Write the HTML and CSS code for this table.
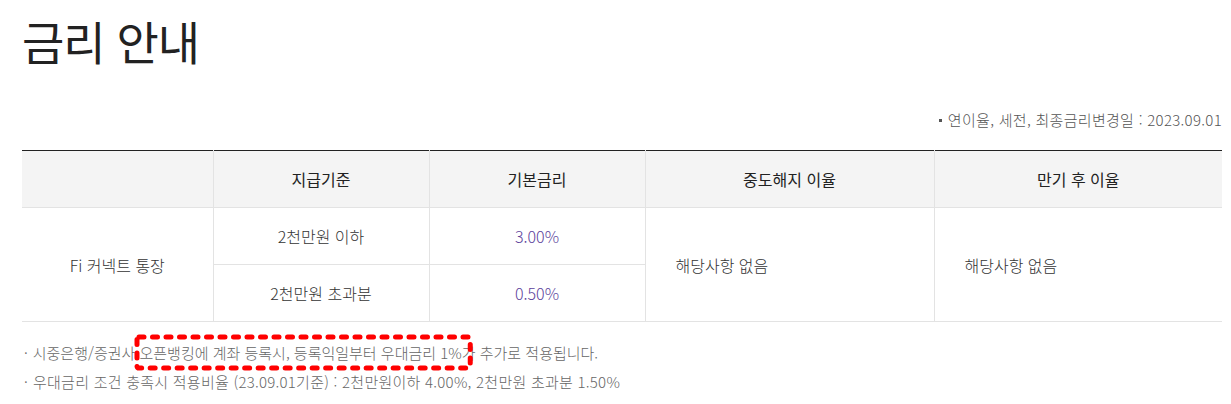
FILE: index.html
```html
<!DOCTYPE html>
<html lang="ko">
<head>
    <meta charset="UTF-8">
    <meta name="viewport" content="width=device-width, initial-scale=1.0">
    <title>금리 안내</title>
    <link rel="stylesheet" href="styles.css">
</head>
<body>
    <div class="container">
        <h1>금리 안내</h1>
        <p class="rate-note">연이율, 세전, 최종금리변경일 : 2023.09.01</p>

        <table class="rate-table">
            <colgroup>
                <col style="width: 191px">
                <col style="width: 216px">
                <col style="width: 216px">
                <col style="width: 289px">
                <col style="width: 288px">
            </colgroup>
            <thead>
                <tr>
                    <th></th>
                    <th>지급기준</th>
                    <th>기본금리</th>
                    <th>중도해지 이율</th>
                    <th>만기 후 이율</th>
                </tr>
            </thead>
            <tbody>
                <tr>
                    <td rowspan="2" class="product">Fi 커넥트 통장</td>
                    <td>2천만원 이하</td>
                    <td class="rate">3.00%</td>
                    <td rowspan="2" class="left">해당사항 없음</td>
                    <td rowspan="2" class="left">해당사항 없음</td>
                </tr>
                <tr>
                    <td>2천만원 초과분</td>
                    <td class="rate">0.50%</td>
                </tr>
            </tbody>
        </table>

        <ul class="notes">
            <li>시중은행/증권사 <span class="mark">오픈뱅킹에 계좌 등록시, 등록익일부터 우대금리 1%<svg class="mark-box" aria-hidden="true"><rect x="0" y="0" width="100%" height="100%" rx="2"></rect></svg></span>가 추가로 적용됩니다.</li>
            <li class="wide">우대금리 조건 충족시 적용비율 (23.09.01기준) : 2천만원이하 4.00%, 2천만원 초과분 1.50%</li>
        </ul>
    </div>
</body>
</html>
```

FILE: styles.css
```css
body {
    margin: 0;
    font-family: 'Noto Sans CJK KR', 'Noto Sans', sans-serif;
    font-weight: 300;
    color: #222;
    background-color: #fff;
}

.container {
    width: 1200px;
    margin-left: 22px;
}

h1 {
    margin: 0;
    padding-top: 10px;
    font-size: 46px;
    font-weight: 400;
    line-height: 60px;
    color: #222;
    letter-spacing: -1px;
}

.rate-note {
    margin: 40px 0 0;
    text-align: right;
    font-size: 15px;
    line-height: 20px;
    color: #555;
    letter-spacing: 0.3px;
}

.rate-note::before {
    content: '';
    display: inline-block;
    width: 3px;
    height: 3px;
    margin: 0 6px 3px 0;
    background-color: #555;
    vertical-align: middle;
}

.rate-table {
    width: 1200px;
    margin-top: 20px;
    border-collapse: collapse;
    table-layout: fixed;
    border-top: 1px solid #222;
}

.rate-table th {
    height: 56px;
    padding: 0;
    background-color: #f4f4f4;
    font-size: 16px;
    font-weight: 400;
    color: #222;
    border-bottom: 1px solid #e3e3e3;
    border-left: 1px solid #e3e3e3;
}

.rate-table th:first-child {
    border-left: none;
}

.rate-table td {
    height: 56px;
    padding: 0;
    text-align: center;
    font-size: 16px;
    color: #333;
    border-bottom: 1px solid #e3e3e3;
    border-left: 1px solid #e3e3e3;
}

.rate-table td.product {
    border-left: none;
}

.rate-table td.left {
    text-align: left;
    padding-left: 30px;
}

.rate-table td.rate {
    color: #5c3f9c;
}

.notes {
    list-style: none;
    margin: 16px 0 0;
    padding: 0 0 0 2px;
    font-size: 15px;
    line-height: 29px;
    color: #666;
}

.notes li.wide {
    letter-spacing: 0.25px;
}

.notes li::before {
    content: '·';
    margin-right: 5px;
}

.mark {
    position: relative;
}

.mark-box {
    position: absolute;
    left: -3px;
    top: -5px;
    width: calc(100% + 11px);
    height: 31px;
    overflow: visible;
    pointer-events: none;
}

.mark-box rect {
    fill: none;
    stroke: #ff0000;
    stroke-width: 5;
    stroke-linecap: round;
    stroke-dasharray: 5 8.5;
}
```
